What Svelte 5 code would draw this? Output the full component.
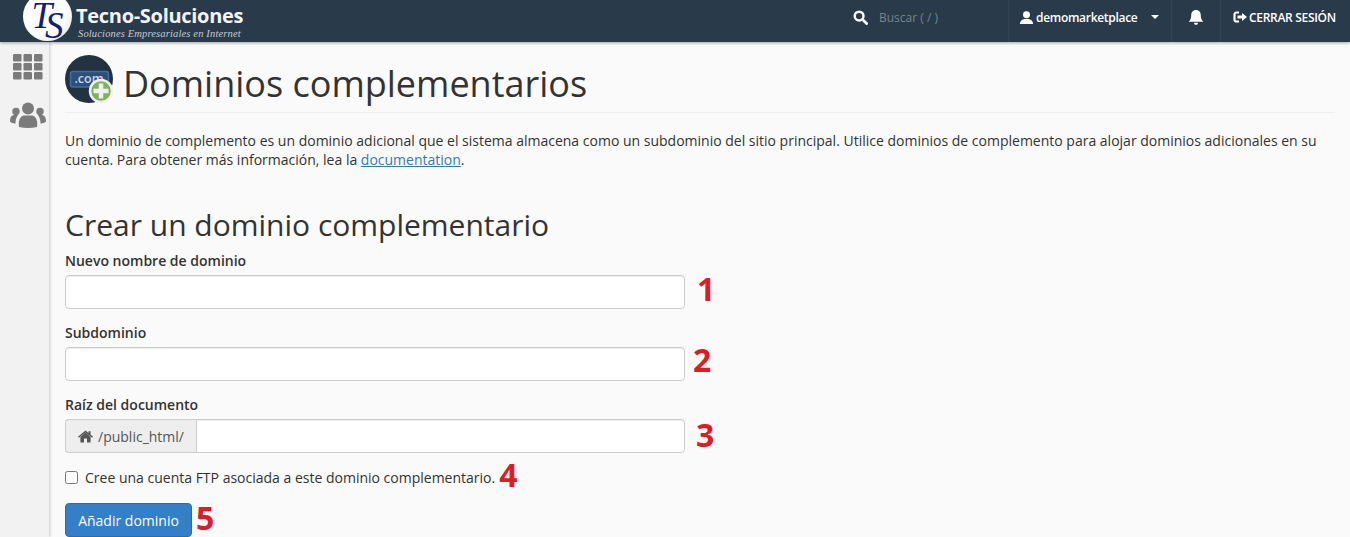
<script>
  let fields = [
    { label: "Nuevo nombre de dominio", mark: "1" },
    { label: "Subdominio", mark: "2" },
  ]
</script>

<div class="page">
  <header class="topbar">
    <div class="brand">
      <div class="logo"><span class="t">T</span><span class="s">S</span></div>
      <div class="brand-text">
        <div class="brand-name">Tecno-Soluciones</div>
        <div class="brand-sub">Soluciones Empresariales en Internet</div>
      </div>
    </div>
    <div class="top-right">
      <div class="search">
        <svg width="15" height="15" viewBox="0 0 16 16"><circle cx="6.5" cy="6.5" r="4.7" fill="none" stroke="#fff" stroke-width="2.6"/><path d="M10 10l4.5 4.5" stroke="#fff" stroke-width="3" stroke-linecap="round"/></svg>
        <span>Buscar ( / )</span>
      </div>
      <div class="top-item user">
        <svg width="13" height="13" viewBox="0 0 12 12"><circle cx="6" cy="3.4" r="3.2" fill="#fff"/><path d="M0 12c0-3 2-4 4.2-4.6h3.6C10 8 12 9 12 12z" fill="#fff"/></svg>
        <span>demomarketplace</span>
        <i class="caret"></i>
      </div>
      <div class="top-item bell">
        <svg width="16" height="17" viewBox="0 0 15 16"><path d="M7.5 1c3 0 4.500 2.200 4.500 5 0 3 1 4.500 2.500 6H.5C2 10.500 3 9 3 6c0-2.800 1.500-5 4.500-5z" fill="#fff"/><path d="M5.500 13h4a2 2 0 0 1-4 0z" fill="#fff"/></svg>
      </div>
      <div class="top-item logout">
        <svg width="14" height="12" viewBox="0 0 14 12"><path d="M6 1.500H3.500A2 2 0 0 0 1.500 3.500v5a2 2 0 0 0 2 2H6" fill="none" stroke="#fff" stroke-width="2.200"/><path d="M4.500 4.500H9V2l5 4-5 4V7.500H4.500z" fill="#fff"/></svg>
        <span>CERRAR SESIÓN</span>
      </div>
    </div>
  </header>

  <div class="body">
    <aside class="side">
      <svg width="30" height="26" viewBox="0 0 30 26" fill="#7b7b7b">
        {#each [0, 9, 18] as y}
          {#each [0, 10.500, 21] as x}
            <rect {x} {y} width="8.500" height="7.500" rx="1.200"/>
          {/each}
        {/each}
      </svg>
      <svg width="36" height="26" viewBox="0 0 36 26" fill="#7b7b7b">
        <circle cx="18" cy="6.500" r="6"/>
        <circle cx="6" cy="9.500" r="3.700"/>
        <circle cx="30" cy="9.500" r="3.700"/>
        <path d="M9 25c-1-6 1-11 5-11.500h8c4 .5 6 5.500 5 11.500q-9 2-18 0z"/>
        <path d="M0 19c0-4 2-6 4-6h4c-1.500 2-2.500 5-2.500 8.500C3 21.500 0 20.500 0 19z"/>
        <path d="M36 19c0-4-2-6-4-6h-4c1.500 2 2.500 5 2.500 8.500C33 21.500 36 20.500 36 19z"/>
      </svg>
    </aside>

    <main class="content">
      <div class="title-row">
        <svg class="title-icon" width="48" height="48" viewBox="0 0 48 48">
          <circle cx="24" cy="24" r="24" fill="#223241"/>
          <rect x="5.500" y="16.500" width="38" height="15.500" rx="2.500" fill="#2f4f78" stroke="#3f6ea5" stroke-width="1.500"/>
          <text x="24" y="27.500" text-anchor="middle" class="com">.com</text>
          <circle cx="36" cy="36" r="11" fill="#7eb35a" stroke="#f0f0f0" stroke-width="2.500"/>
          <path d="M36 28.500v15M28.500 36h15" stroke="#f0f0f0" stroke-width="4.500"/>
        </svg>
        <h1>Dominios complementarios</h1>
      </div>

      <p class="intro">Un dominio de complemento es un dominio adicional que el sistema almacena como un subdominio del sitio principal. Utilice dominios de complemento para alojar dominios adicionales en su cuenta. Para obtener más información, lea la <a href="#top">documentation</a>.</p>

      <h2>Crear un dominio complementario</h2>

      <form class="form">
        {#each fields as f}
          <div class="field">
            <label for={f.mark}>{f.label}</label>
            <div class="control">
              <input id={f.mark} type="text" />
              <b class="mark">{f.mark}</b>
            </div>
          </div>
        {/each}

        <div class="field">
          <label for="docroot">Raíz del documento</label>
          <div class="control">
            <div class="group">
              <span class="addon">
                <svg width="15" height="13" viewBox="0 0 15 13" fill="#555"><path d="M7.500 2.600 2.400 6.900V12a.5.5 0 0 0 .5.5H6V8.500h3v4h3.100a.5.5 0 0 0 .5-.5V6.900z"/><path d="M7.500.5 0 6.700l.9 1.100 6.600-5.400 6.600 5.400.9-1.100-2.500-2.100V1.200h-2v1.700z"/></svg>
                /public_html/
              </span>
              <input id="docroot" type="text" />
            </div>
            <b class="mark">3</b>
          </div>
        </div>

        <div class="check">
          <input id="ftp" type="checkbox" />
          <label for="ftp">Cree una cuenta FTP asociada a este dominio complementario.</label>
          <b class="mark inline four">4</b>
        </div>

        <div class="submit">
          <button type="button">Añadir dominio</button>
          <b class="mark inline five">5</b>
        </div>
      </form>
    </main>
  </div>
</div>

<style>
  :global(body) {
    margin: 0;
    overflow: hidden;
  }

  .page {
    width: 1350px;
    height: 537px;
    overflow: hidden;
    background: #fafafa;
    font-family: "Open Sans", sans-serif;
    font-size: 14px;
    color: #333;
  }

  .topbar {
    height: 42px;
    background: #293a4a;
    display: flex;
    justify-content: space-between;
    box-shadow: 0 1px 3px rgba(0, 0, 0, 0.35);
    position: relative;
    z-index: 2;
  }

  .brand {
    display: flex;
    padding-left: 23px;
    gap: 4px;
  }

  .logo {
    width: 49px;
    height: 49px;
    margin-top: -8px;
    border-radius: 50%;
    background: radial-gradient(circle at 40% 40%, #fff 55%, #d4d6dc);
    color: #14206e;
    font-family: "Liberation Serif", serif;
    font-style: italic;
    font-size: 37px;
    line-height: 30px;
    display: flex;
    justify-content: center;
  }

  .logo .t {
    margin-top: 9px;
  }

  .logo .s {
    margin-left: -7px;
    margin-top: 19px;
  }

  .brand-name {
    color: #f3f4f5;
    font-weight: 700;
    font-size: 20px;
    line-height: 24px;
    margin-top: 4px;
    letter-spacing: -0.3px;
  }

  .brand-sub {
    font-family: "Liberation Serif", serif;
    font-style: italic;
    font-size: 10.500px;
    line-height: 12px;
    color: #c5cad0;
    margin-left: 2px;
    letter-spacing: 0.15px;
  }

  .top-right {
    display: flex;
    align-items: stretch;
    color: #fff;
  }

  .search {
    width: 155px;
    display: flex;
    align-items: center;
    gap: 11px;
    font-size: 12px;
    color: #78848f;
    padding-bottom: 8px;
    box-sizing: border-box;
  }

  .top-item {
    display: flex;
    align-items: center;
    border-left: 1px solid #324353;
    font-size: 12px;
    padding-bottom: 8px;
    box-sizing: border-box;
  }

  .user {
    width: 163px;
    padding-left: 11px;
    gap: 3px;
    font-weight: 600;
    letter-spacing: -0.3px;
  }

  .caret {
    margin-left: 11px;
    border: 4px solid transparent;
    border-top-color: #fff;
    border-bottom: 0;
  }

  .bell {
    width: 49px;
    justify-content: center;
  }

  .logout {
    width: 130px;
    padding-left: 12px;
    gap: 2px;
    font-weight: 600;
    letter-spacing: -0.3px;
  }

  .body {
    display: flex;
  }

  .side {
    width: 49px;
    height: 495px;
    flex: none;
    box-sizing: border-box;
    background: #f2f2f2;
    box-shadow: 1px 0 3px rgba(0, 0, 0, 0.2);
    display: flex;
    flex-direction: column;
    align-items: center;
    gap: 22px;
    padding: 12px 0 0 6px;
  }

  .content {
    flex: 1;
    padding: 13px 15px 0 16px;
    min-width: 0;
  }

  .title-row {
    display: flex;
    align-items: flex-end;
    gap: 10px;
    height: 57px;
    border-bottom: 1px solid #eee;
  }

  .title-icon {
    margin-bottom: 9px;
  }

  .com {
    font-family: "Open Sans", sans-serif;
    font-size: 12.500px;
    font-weight: 600;
    fill: #c8d5e3;
  }

  h1 {
    margin: 0;
    font-size: 36px;
    font-weight: 400;
    line-height: 56px;
  }

  .intro {
    margin: 18px 0 0;
    line-height: 19px;
  }

  a {
    color: #337ab7;
  }

  h2 {
    margin: 38px 0 0;
    font-size: 30px;
    font-weight: 400;
    line-height: 36px;
  }

  .form {
    margin-top: 8px;
  }

  .field {
    margin-bottom: 14px;
  }

  .field label {
    display: block;
    font-weight: 600;
    font-size: 14px;
    line-height: 20px;
    margin-bottom: 4px;
  }

  .control {
    position: relative;
    width: 620px;
  }

  input[type="text"] {
    display: block;
    width: 100%;
    height: 34px;
    box-sizing: border-box;
    border: 1px solid #ccc;
    border-radius: 4px;
    background: #fff;
    box-shadow: inset 0 1px 1px rgba(0, 0, 0, 0.075);
  }

  .group {
    display: flex;
    height: 34px;
  }

  .addon {
    display: flex;
    align-items: center;
    gap: 5px;
    padding: 0 12px;
    background: #eee;
    border: 1px solid #ccc;
    border-right: 0;
    border-radius: 4px 0 0 4px;
    color: #555;
    white-space: nowrap;
  }

  .group input {
    flex: 1;
    border-radius: 0 4px 4px 0;
  }

  .mark {
    color: #e01b24;
    font-size: 32px;
    font-weight: 700;
    line-height: 34px;
  }

  .control .mark {
    position: absolute;
    left: 632px;
    top: -3px;
  }

  .field:nth-child(2) .mark {
    left: 628px;
    top: -4px;
  }

  .field:nth-child(3) .mark {
    left: 631px;
    top: -1px;
  }

  .check {
    display: flex;
    align-items: center;
    height: 32px;
    margin-top: -6px;
  }

  .check input {
    margin: 0 7px 0 0;
    width: 13px;
    height: 13px;
  }

  .mark.inline {
    margin-left: 4px;
  }

  .mark.four {
    margin-top: -4px;
  }

  .mark.five {
    line-height: 30px;
    margin-top: -4px;
  }

  .submit {
    display: flex;
    align-items: center;
    margin-top: 10px;
  }

  button {
    font: inherit;
    color: #fff;
    background: #337fc8;
    border: 1px solid #2e6da4;
    border-radius: 4px;
    padding: 0 12px;
    height: 34px;
    width: 127px;
  }
</style>
